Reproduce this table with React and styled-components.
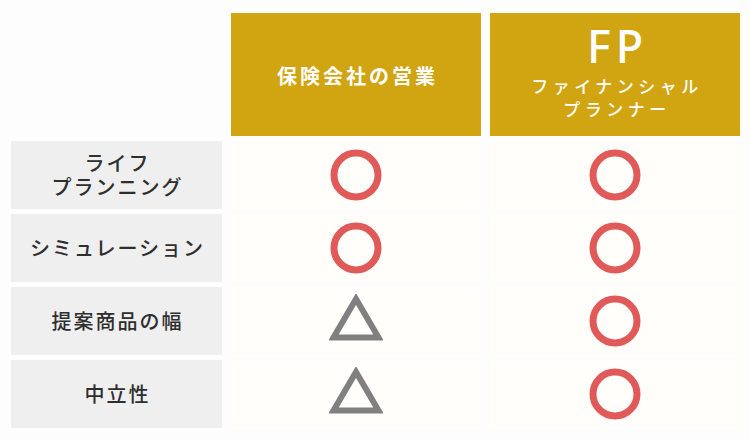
import React from "react";
import styled, { createGlobalStyle } from "styled-components";

const Global = createGlobalStyle`
  html, body { margin: 0; padding: 0; background: #fdfdfd; }
  body { font-family: "Noto Sans CJK JP", "Noto Sans", sans-serif; }
`;

const Table = styled.div`
  display: flex;
  flex-direction: column;
  gap: 5px;
  padding: 13px 10px 12px 11px;
  width: 750px;
  box-sizing: border-box;
`;

const Row = styled.div`
  display: grid;
  grid-template-columns: 211px 250px 250px;
  column-gap: 9px;
  height: ${(p) => (p.$header ? "123px" : "68px")};
`;

const Blank = styled.div``;

const HeadCell = styled.div`
  background: #d1a412;
  color: #ffffff;
  display: flex;
  flex-direction: column;
  align-items: center;
  justify-content: center;
  text-align: center;
`;

const HeadTitle = styled.div`
  font-size: 20px;
  font-weight: 700;
  letter-spacing: 3px;
  line-height: 1;
  padding-left: 3px;
  margin-top: 2px;
`;

const Abbr = styled.div`
  font-family: "Noto Sans", sans-serif;
  font-size: 45px;
  font-weight: 500;
  letter-spacing: 5px;
  line-height: 44px;
  padding-left: 5px;
  margin-top: -6px;
`;

const SubTitle = styled.div`
  font-size: 17px;
  font-weight: 500;
  letter-spacing: 4.5px;
  line-height: 23px;
  padding-left: 4px;
  margin-top: 6px;
`;

const Label = styled.div`
  background: #efefef;
  color: #2e2e2e;
  display: flex;
  align-items: center;
  justify-content: center;
  text-align: center;
  font-size: 20px;
  font-weight: 500;
  letter-spacing: 2px;
  padding-left: 2px;
`;

const LabelLine = styled.div`
  line-height: 24px;
`;

const Cell = styled.div`
  background: #fffefa;
  display: flex;
  align-items: center;
  justify-content: center;
`;

const Circle = () => (
  <svg width="52" height="52" viewBox="0 0 52 52">
    <circle cx="26" cy="26" r="22" fill="none" stroke="#e05a5a" strokeWidth="7" />
  </svg>
);

const Triangle = () => (
  <svg width="54" height="48" viewBox="0 0 54 48" style={{ marginTop: "-6px" }}>
    <polygon
      points="27,5 49.5,43.5 4.5,43.5"
      fill="none"
      stroke="#808080"
      strokeWidth="6"
      strokeLinejoin="miter"
    />
  </svg>
);

const rows = [
  { label: ["ライフ", "プランニング"], a: "o", b: "o" },
  { label: ["シミュレーション"], a: "o", b: "o" },
  { label: ["提案商品の幅"], a: "t", b: "o" },
  { label: ["中立性"], a: "t", b: "o" },
];

const Mark = ({ kind }) => (kind === "o" ? <Circle /> : <Triangle />);

export default function App() {
  return (
    <>
      <Global />
      <Table>
        <Row $header>
          <Blank />
          <HeadCell>
            <HeadTitle>保険会社の営業</HeadTitle>
          </HeadCell>
          <HeadCell>
            <Abbr>FP</Abbr>
            <SubTitle>
              ファイナンシャル
              <br />
              プランナー
            </SubTitle>
          </HeadCell>
        </Row>
        {rows.map((r, i) => (
          <Row key={i}>
            <Label>
              <div>
                {r.label.map((l, j) => (
                  <LabelLine key={j}>{l}</LabelLine>
                ))}
              </div>
            </Label>
            <Cell>
              <Mark kind={r.a} />
            </Cell>
            <Cell>
              <Mark kind={r.b} />
            </Cell>
          </Row>
        ))}
      </Table>
    </>
  );
}
